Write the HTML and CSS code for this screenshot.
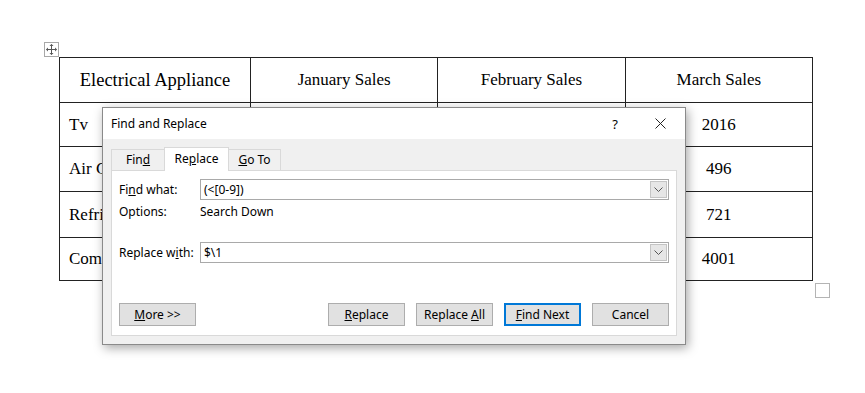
FILE: index.html
```html
<!DOCTYPE html>
<html>
<head>
    <meta charset="utf-8">
    <title>Find and Replace</title>
    <link rel="stylesheet" href="styles.css">
</head>
<body>
<div class="page">
    <div class="table-wrap">
        <span class="move-handle">
            <svg width="11" height="11" viewBox="0 0 11 11">
                <path d="M5.5 0.5v10M0.5 5.5h10" stroke="#555" stroke-width="1"/>
                <path d="M5.5 0l-2 2h4zM5.5 11l-2-2h4zM0 5.5l2-2v4zM11 5.5l-2-2v4z" fill="#555"/>
            </svg>
        </span>
        <table class="sales">
            <tr class="r1">
                <th class="big">Electrical Appliance</th>
                <th>January Sales</th>
                <th>February Sales</th>
                <th>March Sales</th>
            </tr>
            <tr class="r2">
                <td class="name">Tv</td><td>1250</td><td>1840</td><td>2016</td>
            </tr>
            <tr class="r3">
                <td class="name">Air Conditioner</td><td>312</td><td>405</td><td>496</td>
            </tr>
            <tr class="r4">
                <td class="name">Refrigerator</td><td>640</td><td>688</td><td>721</td>
            </tr>
            <tr class="r5">
                <td class="name">Computer</td><td>3520</td><td>3875</td><td>4001</td>
            </tr>
        </table>
        <span class="resize-handle"></span>
    </div>

    <div class="dialog">
        <div class="dialog-title">
            <span class="title-text">Find and Replace</span>
            <span class="help">?</span>
            <span class="close">
                <svg width="11" height="11" viewBox="0 0 11 11">
                    <path d="M0.5 0.5L10.5 10.5M10.5 0.5L0.5 10.5" stroke="#222" stroke-width="1"/>
                </svg>
            </span>
        </div>
        <div class="dialog-body">
            <div class="tabs">
                <span class="tab tab-find">Fin<u>d</u></span>
                <span class="tab active">Re<u>p</u>lace</span>
                <span class="tab tab-goto"><u>G</u>o To</span>
            </div>
            <div class="panel">
                <div class="field-row">
                    <span class="label">Fi<u>n</u>d what:</span>
                    <div class="combo">
                        <span class="combo-text">(&lt;[0-9])</span>
                        <span class="combo-btn">
                            <svg width="9" height="5" viewBox="0 0 9 5"><path d="M0.5 0.5L4.5 4.5L8.5 0.5" stroke="#555" fill="none"/></svg>
                        </span>
                    </div>
                </div>
                <div class="options-row">
                    <span class="label">Options:</span>
                    <span>Search Down</span>
                </div>
                <div class="field-row replace-row">
                    <span class="label">Replace w<u>i</u>th:</span>
                    <div class="combo">
                        <span class="combo-text">$\1</span>
                        <span class="combo-btn">
                            <svg width="9" height="5" viewBox="0 0 9 5"><path d="M0.5 0.5L4.5 4.5L8.5 0.5" stroke="#555" fill="none"/></svg>
                        </span>
                    </div>
                </div>
                <div class="buttons">
                    <button class="btn"><u>M</u>ore &gt;&gt;</button>
                    <div class="btn-group">
                        <button class="btn"><u>R</u>eplace</button>
                        <button class="btn">Replace <u>A</u>ll</button>
                        <button class="btn default"><u>F</u>ind Next</button>
                        <button class="btn">Cancel</button>
                    </div>
                </div>
            </div>
        </div>
    </div>
</div>
</body>
</html>
```

FILE: styles.css
```css
body {
    margin: 0;
    background: #fff;
    font-family: "Noto Sans", "Open Sans", sans-serif;
}

.page {
    position: relative;
    width: 865px;
    height: 393px;
    padding: 57px 0 0 59px;
    box-sizing: border-box;
}

.table-wrap {
    position: relative;
    width: 754px;
}

.move-handle {
    position: absolute;
    left: -15px;
    top: -15px;
    width: 13px;
    height: 13px;
    border: 1px solid #a8a8a8;
    background: #fff;
    display: flex;
    align-items: center;
    justify-content: center;
}

.resize-handle {
    position: absolute;
    right: -17px;
    bottom: -17px;
    width: 13px;
    height: 13px;
    border: 1px solid #b4b4b4;
    background: #fff;
}

.sales {
    border-collapse: collapse;
    width: 754px;
    table-layout: fixed;
    font-family: "Liberation Serif", "Times New Roman", serif;
    font-size: 17px;
    color: #000;
}
.sales th, .sales td {
    border: 1px solid #222;
    text-align: center;
    font-weight: normal;
    padding: 0 9px;
    white-space: nowrap;
}
.sales th.big {
    font-size: 18.5px;
    width: 172px;
}
.sales td.name {
    text-align: left;
}
.r1 { height: 45px; }
.r2 { height: 44px; }
.r3 { height: 45px; }
.r4 { height: 46px; }
.r5 { height: 43px; }

/* dialog */
.dialog {
    position: absolute;
    left: 102px;
    top: 107px;
    width: 584px;
    height: 238px;
    box-sizing: border-box;
    border: 1px solid #8a8a8a;
    background: #f0f0f0;
    box-shadow: 2px 3px 10px rgba(0,0,0,0.35);
    display: flex;
    flex-direction: column;
    font-size: 12px;
    color: #000;
}

.dialog-title {
    height: 31px;
    background: #fff;
    display: flex;
    align-items: center;
    padding-left: 8px;
}
.title-text {
    flex: 1;
    font-size: 12px;
}
.help {
    width: 20px;
    text-align: center;
    margin-right: 25px;
    font-size: 13px;
}
.close {
    width: 20px;
    margin-right: 15px;
    display: flex;
    justify-content: center;
}

.dialog-body {
    flex: 1;
    padding: 8px;
    display: flex;
    flex-direction: column;
}

.tabs {
    display: flex;
    align-items: flex-end;
    height: 23px;
}
.tab {
    height: 21px;
    box-sizing: border-box;
    border: 1px solid #d9d9d9;
    border-bottom: none;
    background: #f0f0f0;
    padding: 1px 0 0;
    margin-right: -1px;
    text-align: center;
    white-space: nowrap;
}
.tab-find { width: 54px; }
.tab-goto { width: 53px; }
.tab.active {
    width: 65px;
    height: 24px;
    background: #fff;
    padding-top: 2px;
    position: relative;
    z-index: 1;
    margin-bottom: -1px;
}

.panel {
    flex: 1;
    background: #fff;
    border: 1px solid #d9d9d9;
    padding: 8px 7px 9px 7px;
    display: flex;
    flex-direction: column;
}

.field-row {
    display: flex;
    align-items: center;
    height: 21px;
}
.label {
    width: 81px;
    flex: none;
}
.combo {
    flex: 1;
    height: 21px;
    box-sizing: border-box;
    border: 1px solid #a9a9a9;
    display: flex;
    align-items: center;
    padding-left: 3px;
}
.combo-text {
    flex: 1;
}
.combo-btn {
    width: 17px;
    height: 17px;
    margin-right: 1px;
    box-sizing: border-box;
    border: 1px solid #c4c4c4;
    background: #e6e6e6;
    display: flex;
    align-items: center;
    justify-content: center;
}

.options-row {
    display: flex;
    height: 16px;
    align-items: center;
    margin-top: 3px;
}
.replace-row {
    margin-top: 23px;
}

.buttons {
    margin-top: auto;
    display: flex;
    justify-content: space-between;
}
.btn-group {
    display: flex;
    gap: 11px;
}
.btn {
    width: 77px;
    height: 23px;
    box-sizing: border-box;
    border: 1px solid #adadad;
    background: #e1e1e1;
    font-family: "Noto Sans", "Open Sans", sans-serif;
    font-size: 12px;
    color: #000;
    padding: 0;
}
.btn.default {
    border-color: #0078d7;
    box-shadow: inset 0 0 0 1px #0078d7;
}
```
